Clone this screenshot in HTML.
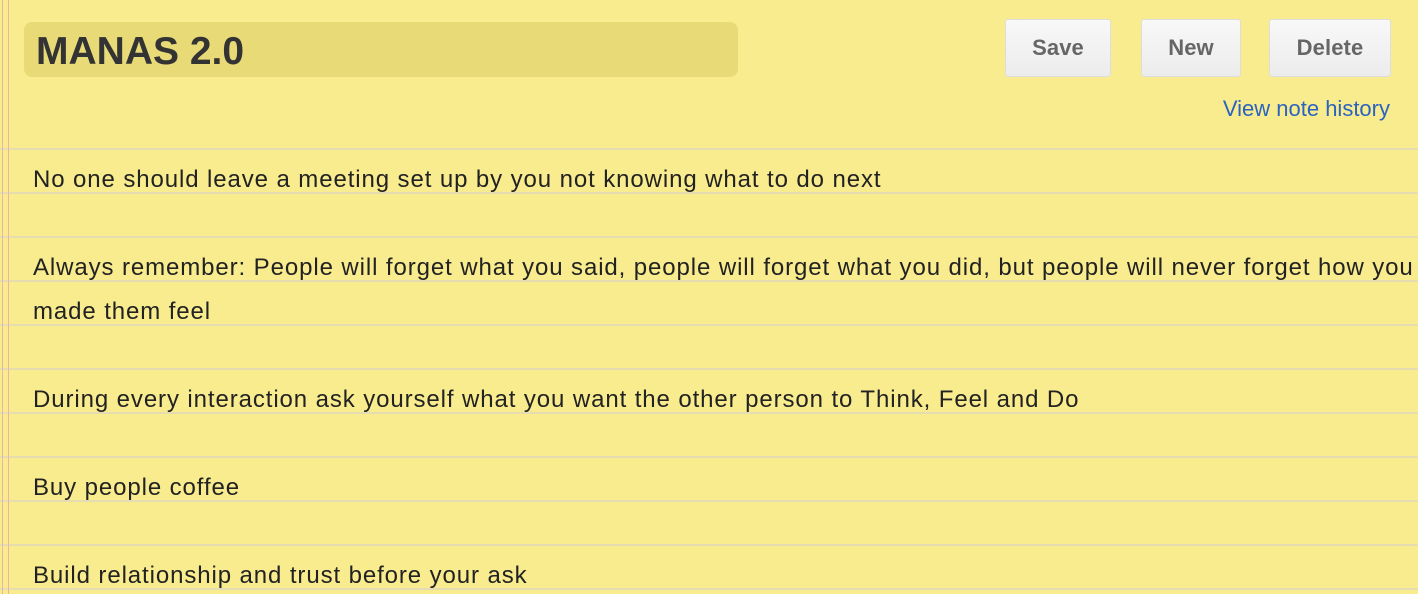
<!DOCTYPE html>
<html><head><style>
html,body{margin:0;padding:0;}
body{width:1418px;height:594px;overflow:hidden;position:relative;background:#f9ec8f;font-family:"Liberation Sans",Arial,sans-serif;}
.hl{position:absolute;left:0;width:1418px;height:2px;background:#e6dcb2;}
.vl{position:absolute;top:0;width:1px;height:594px;background:#eab5a0;}
.title{position:absolute;left:24px;top:22px;width:714px;height:55px;border-radius:8px;background:#e9da78;}
.title span{position:absolute;left:12px;top:8px;font-size:39px;font-weight:bold;color:#333;}
.btn{position:absolute;top:19px;height:58px;background:linear-gradient(#f8f8f8,#ececec);border:1px solid #ddd;border-radius:3px;box-sizing:border-box;text-align:center;line-height:56px;font-size:22px;letter-spacing:0.1px;font-weight:bold;color:#666;}
.link{position:absolute;right:28px;top:96px;font-size:22px;color:#2b63c0;}
.t{position:absolute;left:33px;font-size:24px;letter-spacing:0.9px;color:#222;white-space:nowrap;}
</style></head><body>
<div class="hl" style="top:148px"></div>
<div class="hl" style="top:192px"></div>
<div class="hl" style="top:236px"></div>
<div class="hl" style="top:280px"></div>
<div class="hl" style="top:324px"></div>
<div class="hl" style="top:368px"></div>
<div class="hl" style="top:412px"></div>
<div class="hl" style="top:456px"></div>
<div class="hl" style="top:500px"></div>
<div class="hl" style="top:544px"></div>
<div class="hl" style="top:588px"></div>
<div class="vl" style="left:2px"></div>
<div class="vl" style="left:8px"></div>
<div class="title"><span>MANAS 2.0</span></div>
<div class="btn" style="left:1005px;width:106px">Save</div>
<div class="btn" style="left:1141px;width:100px">New</div>
<div class="btn" style="left:1269px;width:122px">Delete</div>
<div class="link">View note history</div>
<div class="t" style="top:166px">No one should leave a meeting set up by you not knowing what to do next</div>
<div class="t" style="top:254px">Always remember: People will forget what you said, people will forget what you did, but people will never forget how you</div>
<div class="t" style="top:298px">made them feel</div>
<div class="t" style="top:386px">During every interaction ask yourself what you want the other person to Think, Feel and Do</div>
<div class="t" style="top:474px">Buy people coffee</div>
<div class="t" style="top:562px">Build relationship and trust before your ask</div>
</body></html>
